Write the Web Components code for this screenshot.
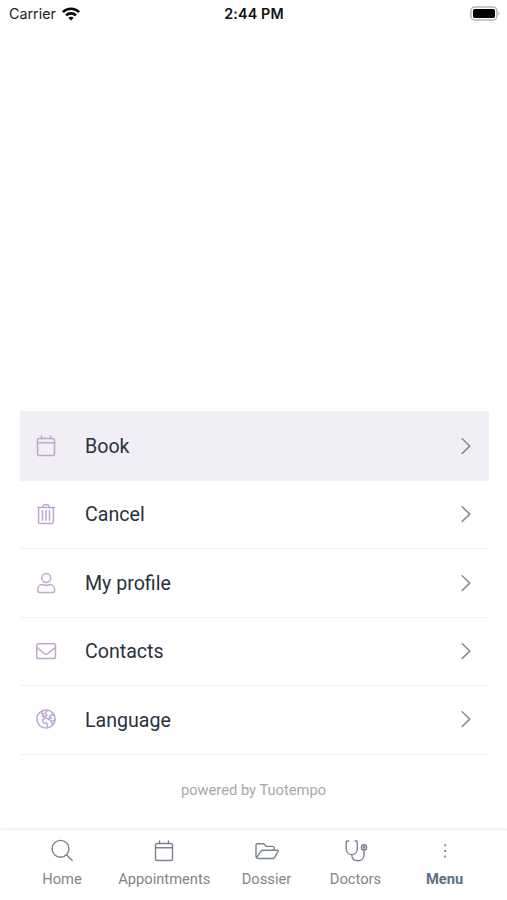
<!DOCTYPE html>
<html lang="en"><head><meta charset="utf-8"><title>Menu</title>
<style>html,body{margin:0;height:100%;background:#fff}body{overflow:hidden}</style></head>
<body><app-screen></app-screen>
<script>
const ICONS = {
  calendar: '<rect x="3.5" y="4.5" width="17" height="17" rx="1.8"/><path d="M3.5 8.7H20.5M7.5 2V4.5M16.5 2V4.5"/>',
  trash: '<path d="M3.6 5.6H20.4M4.6 5.6V20Q4.6 21.6 6.2 21.6H17.8Q19.4 21.6 19.4 20V5.6M8 5.4L9.4 3.4Q9.8 2.8 10.5 2.8H13.5Q14.2 2.8 14.6 3.4L16 5.4M8.5 8.8V18.2M12 8.8V18.2M15.5 8.8V18.2"/>',
  user: '<circle cx="12.2" cy="7" r="4.4"/><path d="M8.3 13.6C10.1 13.6 10.5 14.4 12.2 14.4S14.3 13.6 16.1 13.6C19 13.6 20.6 16 20.6 18.6V19.6Q20.6 21.5 18.8 21.5H5.6Q3.8 21.5 3.8 19.6V18.6C3.8 16 5.4 13.6 8.3 13.6Z"/>',
  mail: '<rect x="2.7" y="4.7" width="18.8" height="14.8" rx="1.8"/><path d="M2.7 8.4L10.2 14.5Q12.1 16 14 14.5L21.5 8.4"/>',
  globe: '<circle cx="12" cy="12" r="9.1"/><path d="M9.2 3.4L7.5 6.1L9.8 7.4L8.3 9.2L10.6 10.2L13 7.9L11.1 6.2L13.6 3.2M20.4 8.5L17.5 7.6L15.2 9.8L17.5 11L14.3 12L11.3 10.9L8.4 13.2L9.5 15.8L12.8 16.2L13.7 20.5M14.3 12L17.3 14.1L20.8 13.2M17.3 14.1L18.4 18"/>',
  chevron: '<path d="M8.2 4.8L15.8 12.1L8.2 19.4"/>',
  search: '<circle cx="10.5" cy="9.8" r="8.4"/><path d="M16.5 15.8L22.2 21.4"/>',
  folder: '<path d="M4.1 19.5Q1 19.5 1 17.3V6.7Q1 4.8 2.8 4.8H8.8L11.4 7.4H17.4Q19.2 7.4 19.2 9.2V11.2M1.8 18.3L6 12.1Q6.6 11.2 7.7 11.2H22.2Q23.7 11.2 23 12.5L19.7 18.3Q19 19.5 17.7 19.5H3.7Q1.4 19.5 1.8 18.3Z"/>',
  stethoscope: '<path d="M4.6 2H3.4Q2.3 2 2.3 3.3V9.4C2.3 13 4.5 15.6 7.8 15.6S13.3 13 13.3 9.4V3.3Q13.3 2 12.2 2H11M7.8 15.6C7.8 19.4 10.3 21.8 14 21.8S20 19.3 20 15.8V11.2"/><circle cx="20" cy="8.4" r="2.6"/><circle cx="20" cy="8.4" r=".6"/>',
  dots: '<g fill="currentColor" stroke="none"><rect x="11.2" y="5.2" width="2" height="2" rx=".5"/><rect x="11.2" y="11" width="2" height="2" rx=".5"/><rect x="11.2" y="16.6" width="2" height="2" rx=".5"/></g>'
};
function define(name, render) {
  customElements.define(name, class extends HTMLElement {
    connectedCallback() {
      if (!this.shadowRoot) this.attachShadow({mode:'open'}).innerHTML = render(this);
    }
  });
}
define('line-icon', e => `<style>:host{display:block;width:24px;height:24px;flex:none}svg{display:block}</style>
<svg width="24" height="24" viewBox="0 0 24 24" fill="none" stroke="currentColor" stroke-width="${e.getAttribute('weight') || 1.5}" stroke-linecap="round" stroke-linejoin="round">${ICONS[e.getAttribute('name')]}</svg>`);

define('status-bar', () => `<style>
:host{display:grid;grid-template-columns:1fr auto 1fr;align-items:center;height:27px;box-sizing:border-box;padding:0 6px 0 9px;font:14.3px/27px Inter,sans-serif;color:#222}
.l{display:flex;align-items:center;gap:6px}.time{font-weight:600;font-size:14.3px;letter-spacing:.15px;color:#111;margin-right:2px}
.b{justify-self:end}svg{display:block}</style>
<div class="l"><span>Carrier</span><svg width="18" height="14" viewBox="0 0 18 14" fill="none" stroke="#050505" stroke-width="2.6"><path d="M.9 5.1C5.4.7 12.6.7 17.1 5.1"/><path d="M4 8.4C6.8 5.7 11.2 5.7 14 8.4"/><path d="M9 13.6L6.3 10.8Q9 8.7 11.7 10.8Z" fill="#050505" stroke="none"/></svg></div>
<span class="time">2:44 PM</span>
<svg class="b" width="31" height="15" viewBox="0 0 31 15"><rect x=".9" y="1" width="26" height="13" rx="4" fill="#fff" stroke="#b5b5b5" stroke-width="1.5"/><rect x="3" y="3" width="22" height="9" rx="1.8" fill="#000"/><path d="M28.5 5.2Q31 7.5 28.5 9.8Z" fill="#b5b5b5"/></svg>`);

define('menu-row', e => `<style>
:host{display:flex;align-items:center;height:68.4px;box-sizing:border-box;padding:0 11px 0 14px;border-bottom:1.5px solid #f0f0f2;color:#29323d;font:19.6px/26px Roboto,sans-serif}
:host([active]){height:70px;background:#f2eef5;border-bottom-color:#f2eef5;padding-top:1px}
.i{color:#bda8d0}.t{flex:1;margin-left:27.5px;padding-top:1.4px}.c{color:#878b94}
:host(:not([active])) line-icon{margin-bottom:.8px}</style>
<line-icon class="i" name="${e.getAttribute('icon')}"></line-icon><span class="t"><slot></slot></span><line-icon class="c" name="chevron" weight="1.5"></line-icon>`);

define('tab-item', e => `<style>
:host{display:flex;flex-direction:column;align-items:center;gap:6px;padding-top:9px;font:14.7px/20px Roboto,sans-serif;color:#7d858f}
:host([active]){font-weight:700;color:#5e7080}line-icon{color:#7b8290}</style>
<line-icon name="${e.getAttribute('icon')}" weight="1.4"></line-icon><span><slot></slot></span>`);

define('tab-bar', () => `<style>
:host{display:grid;grid-template-columns:89px 115.5px 89px 89px 89px;height:71.5px;box-sizing:border-box;padding-left:17.5px;background:#fff;border-top:1px solid #eee;box-shadow:0 -1px 2px #0000000a}</style><slot></slot>`);

define('app-screen', () => `<style>
:host{display:flex;flex-direction:column;height:900px;background:#fff}
main{flex:1;display:flex;flex-direction:column;justify-content:flex-end}
nav{margin:0 18.5px 0 19.5px}
footer{height:74px;box-sizing:border-box;padding-top:25.6px;text-align:center;font:14.7px/20px Roboto,sans-serif;color:#a5a9ad}</style>
<status-bar></status-bar>
<main><nav><menu-row icon="calendar" active>Book</menu-row><menu-row icon="trash">Cancel</menu-row><menu-row icon="user">My profile</menu-row><menu-row icon="mail">Contacts</menu-row><menu-row icon="globe">Language</menu-row></nav>
<footer>powered by Tuotempo</footer></main>
<tab-bar><tab-item icon="search">Home</tab-item><tab-item icon="calendar">Appointments</tab-item><tab-item icon="folder">Dossier</tab-item><tab-item icon="stethoscope">Doctors</tab-item><tab-item icon="dots" active>Menu</tab-item></tab-bar>`);
</script></body></html>
